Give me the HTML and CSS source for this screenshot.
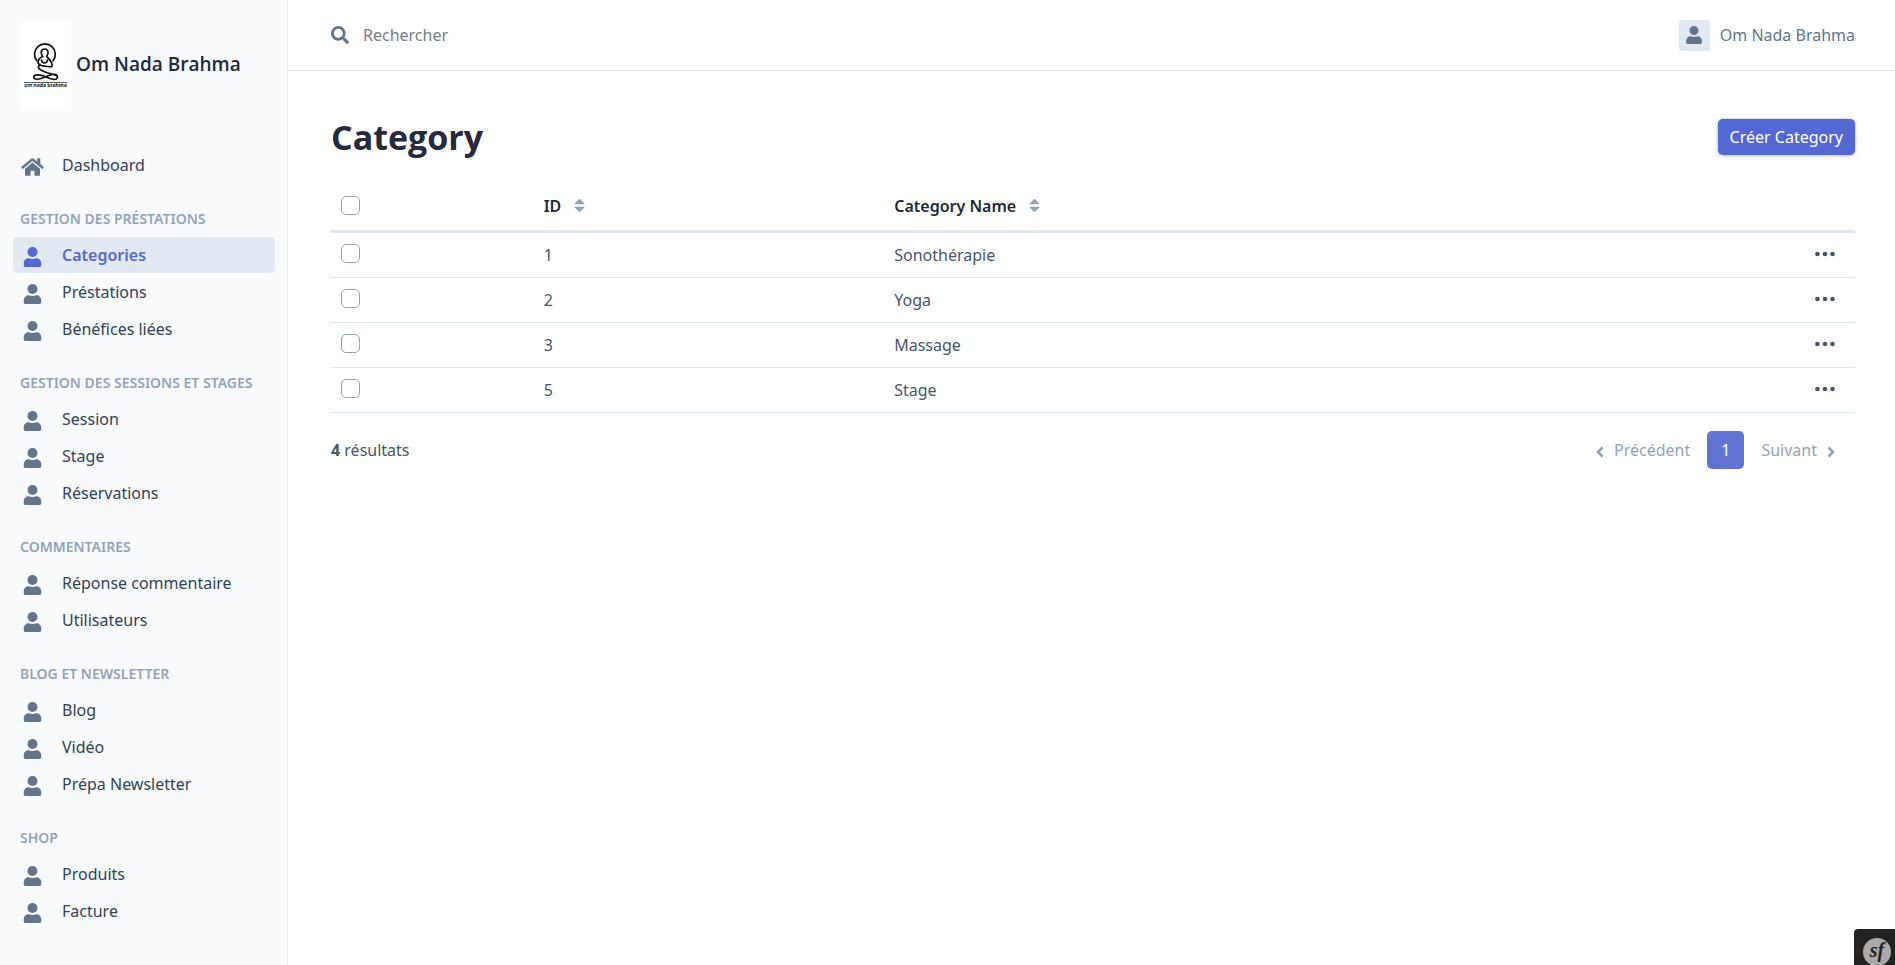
FILE: index.html
```html
<!DOCTYPE html>
<html lang="fr">
<head>
<meta charset="utf-8">
<title>Category</title>
<link rel="stylesheet" href="styles.css">
</head>
<body>
<svg class="sprite" aria-hidden="true">
  <symbol id="user" viewBox="0 0 448 512"><path d="M224 256A128 128 0 1 0 224 0a128 128 0 0 0 0 256zm95 32c-27 12-60 20-95 20s-68-8-95-20C58 288 0 340 0 415v49c0 27 21 48 48 48h352c27 0 48-21 48-48v-49c0-75-58-127-129-127z"/></symbol>
  <symbol id="home" viewBox="0 0 576 512"><path d="M280 148 96 300v164a16 16 0 0 0 16 16h112a16 16 0 0 0 16-16v-96a16 16 0 0 1 16-16h64a16 16 0 0 1 16 16v96a16 16 0 0 0 16 16h112a16 16 0 0 0 16-16V300L296 148a12 12 0 0 0-16 0zM572 251l-84-69V44a12 12 0 0 0-12-12h-56a12 12 0 0 0-12 12v72l-90-74a48 48 0 0 0-61 0L4 251a12 12 0 0 0-1 17l25 31a12 12 0 0 0 17 2l235-194a12 12 0 0 1 16 0l235 194a12 12 0 0 0 17-2l25-31a12 12 0 0 0-1-17z"/></symbol>
  <symbol id="search" viewBox="0 0 512 512"><path d="M505 443 405 343c-4-4-11-7-17-7h-16a208 208 0 1 0-36 36v16c0 6 3 13 7 17l100 100c9 9 24 9 34 0l28-28c9-10 9-25 0-34zM208 336a128 128 0 1 1 0-256 128 128 0 0 1 0 256z"/></symbol>
  <symbol id="sort" viewBox="0 0 12 16"><path d="M1 6.700Q0 6.700 .7 5.800L5.300 1.200Q6 .5 6.700 1.200L11.300 5.800Q12 6.700 11 6.700zM1 9.300Q0 9.300 .7 10.200L5.300 14.800Q6 15.500 6.700 14.800L11.300 10.200Q12 9.300 11 9.300z"/></symbol>
  <symbol id="dots" viewBox="0 0 20 6"><circle cx="2.500" cy="3" r="2.300"/><circle cx="10" cy="3" r="2.300"/><circle cx="17.500" cy="3" r="2.300"/></symbol>
  <symbol id="left" viewBox="0 0 8 12"><path d="M6.500 1.500 2 6l4.500 4.500" fill="none" stroke="currentColor" stroke-width="2.600"/></symbol>
  <symbol id="right" viewBox="0 0 8 12"><path d="M1.500 1.500 6 6l-4.500 4.500" fill="none" stroke="currentColor" stroke-width="2.600"/></symbol>
</svg>
<div class="layout">
  <aside class="sidebar">
    <a class="brand" href="#">
      <svg class="brand-logo" viewBox="0 0 51 90" aria-hidden="true">
        <rect width="51" height="90" fill="#fff"/>
        <g fill="none" stroke="#111" stroke-width="1.700" stroke-linecap="round">
          <path d="M16.800 39.800A10.400 10.400 0 1 1 33 39.800"/>
          <path d="M22.800 35.500C20 32 21 28 24.600 28s4.700 4 2 7.500M22.800 35.500C17 38 17 43 20.500 44.200c3 1 7 1.300 10.700 1.600 2-1.500.5-6-4.600-10.300M21.500 39c.5 4 5.500 4 6 0"/>
          <path d="M20 44c-4 3 0 5.200 6 7.200 7 2.400 12.500 3 11.300 5.800-1.300 2.800-7 1-12.300-1.500-5-2.400-11.300-2-11.300.6 0 3.400 6.500 2.300 11.500-.1 5-2.300 9.800-4.300 11.700-1.800"/>
        </g>
        <path d="M4 61.500h43" stroke="#333" stroke-width=".8"/>
        <text class="logo-text" x="25.500" y="66" text-anchor="middle">om nada brahma</text>
      </svg>
      <span>Om Nada Brahma</span>
    </a>
    <nav>
      <ul class="menu"><li><a href="#"><svg class="icon home"><use href="#home"/></svg>Dashboard</a></li></ul>
      <h2>Gestion des préstations</h2>
      <ul class="menu">
        <li><a class="active" href="#" aria-current="page"><svg class="icon"><use href="#user"/></svg>Categories</a></li>
        <li><a href="#"><svg class="icon"><use href="#user"/></svg>Préstations</a></li>
        <li><a href="#"><svg class="icon"><use href="#user"/></svg>Bénéfices liées</a></li>
      </ul>
      <h2>Gestion des sessions et stages</h2>
      <ul class="menu">
        <li><a href="#"><svg class="icon"><use href="#user"/></svg>Session</a></li>
        <li><a href="#"><svg class="icon"><use href="#user"/></svg>Stage</a></li>
        <li><a href="#"><svg class="icon"><use href="#user"/></svg>Réservations</a></li>
      </ul>
      <h2>Commentaires</h2>
      <ul class="menu">
        <li><a href="#"><svg class="icon"><use href="#user"/></svg>Réponse commentaire</a></li>
        <li><a href="#"><svg class="icon"><use href="#user"/></svg>Utilisateurs</a></li>
      </ul>
      <h2>Blog et Newsletter</h2>
      <ul class="menu">
        <li><a href="#"><svg class="icon"><use href="#user"/></svg>Blog</a></li>
        <li><a href="#"><svg class="icon"><use href="#user"/></svg>Vidéo</a></li>
        <li><a href="#"><svg class="icon"><use href="#user"/></svg>Prépa Newsletter</a></li>
      </ul>
      <h2>Shop</h2>
      <ul class="menu">
        <li><a href="#"><svg class="icon"><use href="#user"/></svg>Produits</a></li>
        <li><a href="#"><svg class="icon"><use href="#user"/></svg>Facture</a></li>
      </ul>
    </nav>
  </aside>
  <div class="page">
    <header class="topbar">
      <form class="search">
        <label for="q" aria-label="Rechercher"><svg class="search-icon"><use href="#search"/></svg></label>
        <input id="q" type="search" placeholder="Rechercher">
      </form>
      <a class="account" href="#"><span class="avatar"><svg><use href="#user"/></svg></span>Om Nada Brahma</a>
    </header>
    <main>
      <div class="heading">
        <h1>Category</h1>
        <a class="create" href="#">Créer Category</a>
      </div>
      <table>
        <thead>
          <tr>
            <th class="col-check"><input type="checkbox" aria-label="Tout sélectionner"></th>
            <th class="col-id"><a href="#">ID<svg class="sort"><use href="#sort"/></svg></a></th>
            <th><a href="#">Category Name<svg class="sort"><use href="#sort"/></svg></a></th>
            <th class="col-actions"></th>
          </tr>
        </thead>
        <tbody>
          <tr><td><input type="checkbox" aria-label="Sélectionner 1"></td><td>1</td><td>Sonothérapie</td><td class="actions"><button type="button" aria-label="Actions"><svg><use href="#dots"/></svg></button></td></tr>
          <tr><td><input type="checkbox" aria-label="Sélectionner 2"></td><td>2</td><td>Yoga</td><td class="actions"><button type="button" aria-label="Actions"><svg><use href="#dots"/></svg></button></td></tr>
          <tr><td><input type="checkbox" aria-label="Sélectionner 3"></td><td>3</td><td>Massage</td><td class="actions"><button type="button" aria-label="Actions"><svg><use href="#dots"/></svg></button></td></tr>
          <tr><td><input type="checkbox" aria-label="Sélectionner 5"></td><td>5</td><td>Stage</td><td class="actions"><button type="button" aria-label="Actions"><svg><use href="#dots"/></svg></button></td></tr>
        </tbody>
      </table>
      <div class="results">
        <div><strong>4</strong> résultats</div>
        <nav class="pager" aria-label="Pagination">
          <a href="#"><svg><use href="#left"/></svg>Précédent</a>
          <a class="current" href="#" aria-current="page">1</a>
          <a href="#">Suivant<svg><use href="#right"/></svg></a>
        </nav>
      </div>
    </main>
  </div>
</div>
<button class="toolbar" type="button" aria-label="Symfony"><span>sf</span></button>
</body>
</html>
```

FILE: styles.css
```css
* { box-sizing: border-box; }
body {
  margin: 0;
  background: #fff;
  color: #475569;
  font: 16px/24px "Noto Sans", "Open Sans", sans-serif;
}
a { color: inherit; text-decoration: none; }
svg { flex: none; fill: currentColor; }
.sprite { display: none; }
.layout { display: flex; min-height: 100vh; }

.sidebar {
  flex: none;
  width: 288px;
  padding: 21px 12px 24px 13px;
  border-right: 1px solid #e2e8f0;
  background: #f8fafc;
  color: #334155;
}
.brand {
  display: flex;
  align-items: center;
  gap: 5px;
  margin: 0 0 36px 7px;
  color: #1e293b;
  font: 600 19px/24px "Open Sans", sans-serif;
}
.brand span { padding-bottom: 4px; }
.brand-logo { width: 51px; height: 90px; }
.logo-text { font: 700 5px "Noto Sans", sans-serif; fill: #111; }
.sidebar h2 {
  margin: 0;
  padding: 26px 7px 8px;
  color: #94a3b8;
  font-size: 14px;
  line-height: 20px;
  font-weight: 600;
  text-transform: uppercase;
  white-space: nowrap;
}
.menu { display: grid; gap: 1px; margin: 0; padding: 0; list-style: none; }
.menu a {
  display: flex;
  align-items: center;
  gap: 20px;
  height: 36px;
  padding-left: 10px;
  border-radius: 5px;
}
.menu .icon { width: 19px; height: 20px; color: #64748b; margin-top: 4px; }
.menu .home { width: 23px; margin: 4px -2px 0; }
.menu .active { background: #e2e8f0; color: #5468d4; font-weight: 600; }
.menu .active .icon { color: #5468d4; }

.page { flex: 1; min-width: 0; }
.topbar {
  display: flex;
  align-items: center;
  justify-content: space-between;
  height: 71px;
  padding: 0 40px 0 43px;
  border-bottom: 1px solid #e2e8f0;
  color: #64748b;
}
.search { display: flex; flex: 1; align-items: center; gap: 14px; }
.search label { display: flex; }
.search-icon { width: 18px; height: 18px; }
.search input {
  flex: 1;
  padding: 0;
  border: 0;
  outline: 0;
  background: none;
  color: inherit;
  font: inherit;
}
.search input::placeholder { color: #757d88; }
.account { display: flex; align-items: center; gap: 10px; }
.avatar {
  display: grid;
  place-items: center;
  width: 31px;
  height: 31px;
  border-radius: 3px;
  background: #e2e8f0;
}
.avatar svg { width: 16px; height: 18px; }

main { padding: 43px 40px 24px 43px; }
.heading { display: flex; align-items: center; justify-content: space-between; height: 46px; }
h1 { margin: 0; color: #27293d; font: 700 34px/48px "Open Sans", sans-serif; }
.create {
  padding: 6px 12px;
  border-radius: 5px;
  background: #5468d4;
  box-shadow: 0 0 2px rgba(60, 66, 110, .5), 0 2px 5px rgba(60, 66, 87, .16);
  color: #fff;
}

table {
  width: 100%;
  margin-top: 21px;
  border-collapse: separate;
  border-spacing: 0;
  table-layout: fixed;
}
th, td { padding: 0 10px; text-align: left; }
th { height: 52px; border-bottom: 3px solid #e2e8f0; color: #1e293b; font-weight: 600; }
td { height: 45px; border-bottom: 1px solid #e2e8f0; }
.col-check { width: 13.3%; }
.col-id { width: 23%; }
.col-actions { width: 8%; }
th a { display: inline-flex; align-items: center; gap: 13px; }
.sort { width: 11px; height: 15px; color: #94a3b8; }
input[type="checkbox"] {
  display: block;
  width: 19px;
  height: 19px;
  margin: 0;
  border: 1px solid #94a3b8;
  border-radius: 5px;
  background: #fff;
  appearance: none;
}
td input[type="checkbox"] { margin-bottom: 3px; }
.actions { padding-right: 20px; }
.actions button {
  display: block;
  margin-left: auto;
  padding: 7px 0 9px;
  border: 0;
  background: none;
  color: #475569;
}
.actions svg { display: block; width: 20px; height: 6px; }

.results { display: flex; align-items: center; justify-content: space-between; padding-top: 18px; }
.results strong { font-weight: 700; }
.pager { display: flex; gap: 3px; color: #94a3b8; }
.pager a { display: flex; align-items: center; gap: 10px; padding: 0 14px; height: 38px; }
.pager a:last-child { padding-right: 20px; }
.pager svg { width: 8px; height: 12px; margin-top: 3px; }
.pager .current { border-radius: 5px; background: #6174d1; color: #fff; }

.toolbar {
  position: fixed;
  right: 0;
  bottom: 0;
  width: 41px;
  height: 36px;
  padding: 9px 0 0 9px;
  overflow: hidden;
  border: 0;
  border-radius: 4px 0 0 0;
  background: #222;
}
.toolbar span {
  display: block;
  width: 28px;
  height: 28px;
  border-radius: 50%;
  background: #aaa;
  color: #222;
  font: italic 700 20px/25px "Liberation Serif", serif;
  text-align: center;
}
```
